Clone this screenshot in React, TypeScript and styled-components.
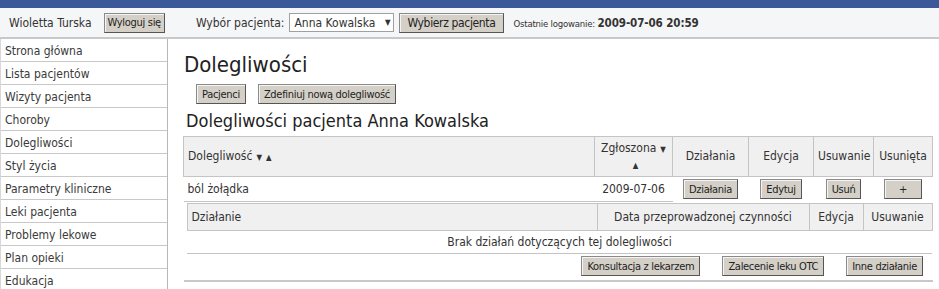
import React from 'react'
import styled, { createGlobalStyle } from 'styled-components'

const GlobalStyle = createGlobalStyle`
  body {
    margin: 0;
    background: #ffffff;
    font-family: "DejaVu Sans Condensed", "DejaVu Sans", sans-serif;
    color: #333333;
  }
`

const menu = [
  'Strona główna',
  'Lista pacjentów',
  'Wizyty pacjenta',
  'Choroby',
  'Dolegliwości',
  'Styl życia',
  'Parametry kliniczne',
  'Leki pacjenta',
  'Problemy lekowe',
  'Plan opieki',
  'Edukacja',
]

export default function App() {
  return (
    <>
      <GlobalStyle />
      <TopStripe />
      <Header>
        <UserName>Wioletta Turska</UserName>
        <Button $tight>Wyloguj się</Button>
        <PatientLabel>Wybór pacjenta:</PatientLabel>
        <Select>
          <span>Anna Kowalska</span>
          <Caret>▼</Caret>
        </Select>
        <Button $big>Wybierz pacjenta</Button>
        <LastLogin>
          Ostatnie logowanie: <b>2009-07-06 20:59</b>
        </LastLogin>
      </Header>
      <Body>
        <Sidebar>
          {menu.map((item) => (
            <MenuItem key={item}>{item}</MenuItem>
          ))}
        </Sidebar>
        <Content>
          <Title>Dolegliwości</Title>
          <ButtonRow>
            <Button>Pacjenci</Button>
            <Button>Zdefiniuj nową dolegliwość</Button>
          </ButtonRow>
          <SubTitle>Dolegliwości pacjenta Anna Kowalska</SubTitle>
          <MainTable>
            <colgroup>
              <col style={{ width: 411 }} />
              <col style={{ width: 78 }} />
              <col style={{ width: 76 }} />
              <col style={{ width: 65 }} />
              <col style={{ width: 60 }} />
              <col style={{ width: 59 }} />
            </colgroup>
            <thead>
              <tr>
                <HeadCell $left>
                  Dolegliwość<Sort>▼</Sort>
                  <Sort>▲</Sort>
                </HeadCell>
                <HeadCell>
                  Zgłoszona<Sort>▼</Sort>
                  <br />
                  <Sort>▲</Sort>
                </HeadCell>
                <HeadCell>Działania</HeadCell>
                <HeadCell>Edycja</HeadCell>
                <HeadCell>Usuwanie</HeadCell>
                <HeadCell>Usunięta</HeadCell>
              </tr>
            </thead>
            <tbody>
              <tr>
                <Cell $left $line>ból żołądka</Cell>
                <Cell $line>2009-07-06</Cell>
                <Cell>
                  <Button>Działania</Button>
                </Cell>
                <Cell>
                  <Button>Edytuj</Button>
                </Cell>
                <Cell>
                  <Button>Usuń</Button>
                </Cell>
                <Cell>
                  <Button $wide>+</Button>
                </Cell>
              </tr>
              <tr>
                <NestCell colSpan={6}>
                  <SubTable>
                    <colgroup>
                      <col style={{ width: 410 }} />
                      <col style={{ width: 212 }} />
                      <col style={{ width: 54 }} />
                      <col style={{ width: 69 }} />
                    </colgroup>
                    <thead>
                      <tr>
                        <SubHead $left>Działanie</SubHead>
                        <SubHead>Data przeprowadzonej czynności</SubHead>
                        <SubHead>Edycja</SubHead>
                        <SubHead>Usuwanie</SubHead>
                      </tr>
                    </thead>
                    <tbody>
                      <tr>
                        <EmptyCell colSpan={4}>Brak działań dotyczących tej dolegliwości</EmptyCell>
                      </tr>
                      <tr>
                        <ActionCell colSpan={4}>
                          <Button>Konsultacja z lekarzem</Button>
                          <Button>Zalecenie leku OTC</Button>
                          <Button>Inne działanie</Button>
                        </ActionCell>
                      </tr>
                    </tbody>
                  </SubTable>
                </NestCell>
              </tr>
            </tbody>
          </MainTable>
        </Content>
      </Body>
    </>
  )
}

const TopStripe = styled.div`
  height: 8px;
  background: #3b5998;
`

const Header = styled.div`
  height: 29px;
  display: flex;
  align-items: center;
  padding-left: 9px;
  background: #f5f6f7;
  border-bottom: 2px solid #c8c8c8;
  font-size: 12px;
`

const UserName = styled.span`
  margin-right: 12px;
`

const PatientLabel = styled.span`
  margin-left: 31px;
  margin-right: 5px;
`

const Select = styled.div`
  width: 105px;
  height: 19px;
  box-sizing: border-box;
  display: flex;
  align-items: center;
  justify-content: space-between;
  padding: 0 3px 0 4px;
  background: #ffffff;
  border: 1px solid #a0a0a0;
  margin-right: 5px;
`

const Caret = styled.span`
  font-size: 8px;
`

const LastLogin = styled.span`
  margin-left: 10px;
  font-size: 9.5px;
  letter-spacing: -0.2px;
  b {
    font-size: 11.5px;
    letter-spacing: -0.1px;
  }
`

const Button = styled.button<{ $big?: boolean; $wide?: boolean; $tight?: boolean }>`
  height: 20px;
  padding: 0 ${(p) => (p.$wide ? '14px' : p.$big ? '7px' : p.$tight ? '3px' : '5px')};
  font-family: "DejaVu Sans Condensed", "DejaVu Sans", sans-serif;
  font-size: ${(p) => (p.$big ? '12px' : '11px')};
  letter-spacing: ${(p) => (p.$big ? '-0.35px' : '-0.3px')};
  color: #222222;
  background: #d4d0c8;
  border: 1px solid #555555;
  border-top-color: #8a8a8a;
  border-left-color: #8a8a8a;
  box-shadow: inset 1px 1px 0 #f4f4f4;
  border-radius: 0;
  cursor: pointer;
`

const Body = styled.div`
  display: flex;
  align-items: flex-start;
`

const Sidebar = styled.ul`
  width: 168px;
  margin: 0;
  padding: 0;
  list-style: none;
  border-right: 1px solid #b8b8b8;
  border-left: 1px solid #d8d8d8;
  box-sizing: border-box;
`

const MenuItem = styled.li`
  height: 23px;
  box-sizing: border-box;
  padding: 5px 0 0 4px;
  font-size: 12px;
  color: #3a3a3a;
  border-bottom: 1px solid #c8c8c8;
`

const Content = styled.div`
  padding: 13px 0 0 15px;
`

const Title = styled.h1`
  margin: 0 0 7px 1px;
  font-size: 22px;
  font-weight: normal;
  color: #222222;
`

const ButtonRow = styled.div`
  display: flex;
  gap: 12px;
  margin-left: 13px;
`

const SubTitle = styled.h2`
  margin: 6px 0 5px 3px;
  font-size: 18px;
  font-weight: normal;
  color: #222222;
`

const MainTable = styled.table`
  width: 749px;
  border-collapse: collapse;
  table-layout: fixed;
  font-size: 12px;
`

const HeadCell = styled.th<{ $left?: boolean }>`
  height: 39px;
  padding: 0 4px;
  background: #f0f0f0;
  border: 1px solid #c4c4c4;
  font-weight: normal;
  text-align: ${(p) => (p.$left ? 'left' : 'center')};
  line-height: 15px;
`

const Sort = styled.span`
  margin-left: 4px;
  font-size: 8px;
`

const Cell = styled.td<{ $left?: boolean; $line?: boolean }>`
  height: 24px;
  padding: 0 4px;
  text-align: ${(p) => (p.$left ? 'left' : 'center')};
  border-bottom: ${(p) => (p.$line ? '1px solid #c4c4c4' : 'none')};
`

const NestCell = styled.td`
  padding: 1px 0 0 3px;
  border-bottom: 2px solid #c8c8c8;
`

const SubTable = styled.table`
  width: 745px;
  border-collapse: collapse;
  table-layout: fixed;
  font-size: 12px;
`

const SubHead = styled.th<{ $left?: boolean }>`
  height: 26px;
  padding: 0 4px;
  background: #f0f0f0;
  border: 1px solid #c4c4c4;
  font-weight: normal;
  text-align: ${(p) => (p.$left ? 'left' : 'center')};
`

const EmptyCell = styled.td`
  height: 20px;
  text-align: center;
  border-bottom: 1px solid #c4c4c4;
`

const ActionCell = styled.td`
  height: 26px;
  padding: 2px 9px 0 0;
  box-sizing: border-box;
  text-align: right;
  vertical-align: top;
  & > button {
    margin-left: 22px;
  }
`
